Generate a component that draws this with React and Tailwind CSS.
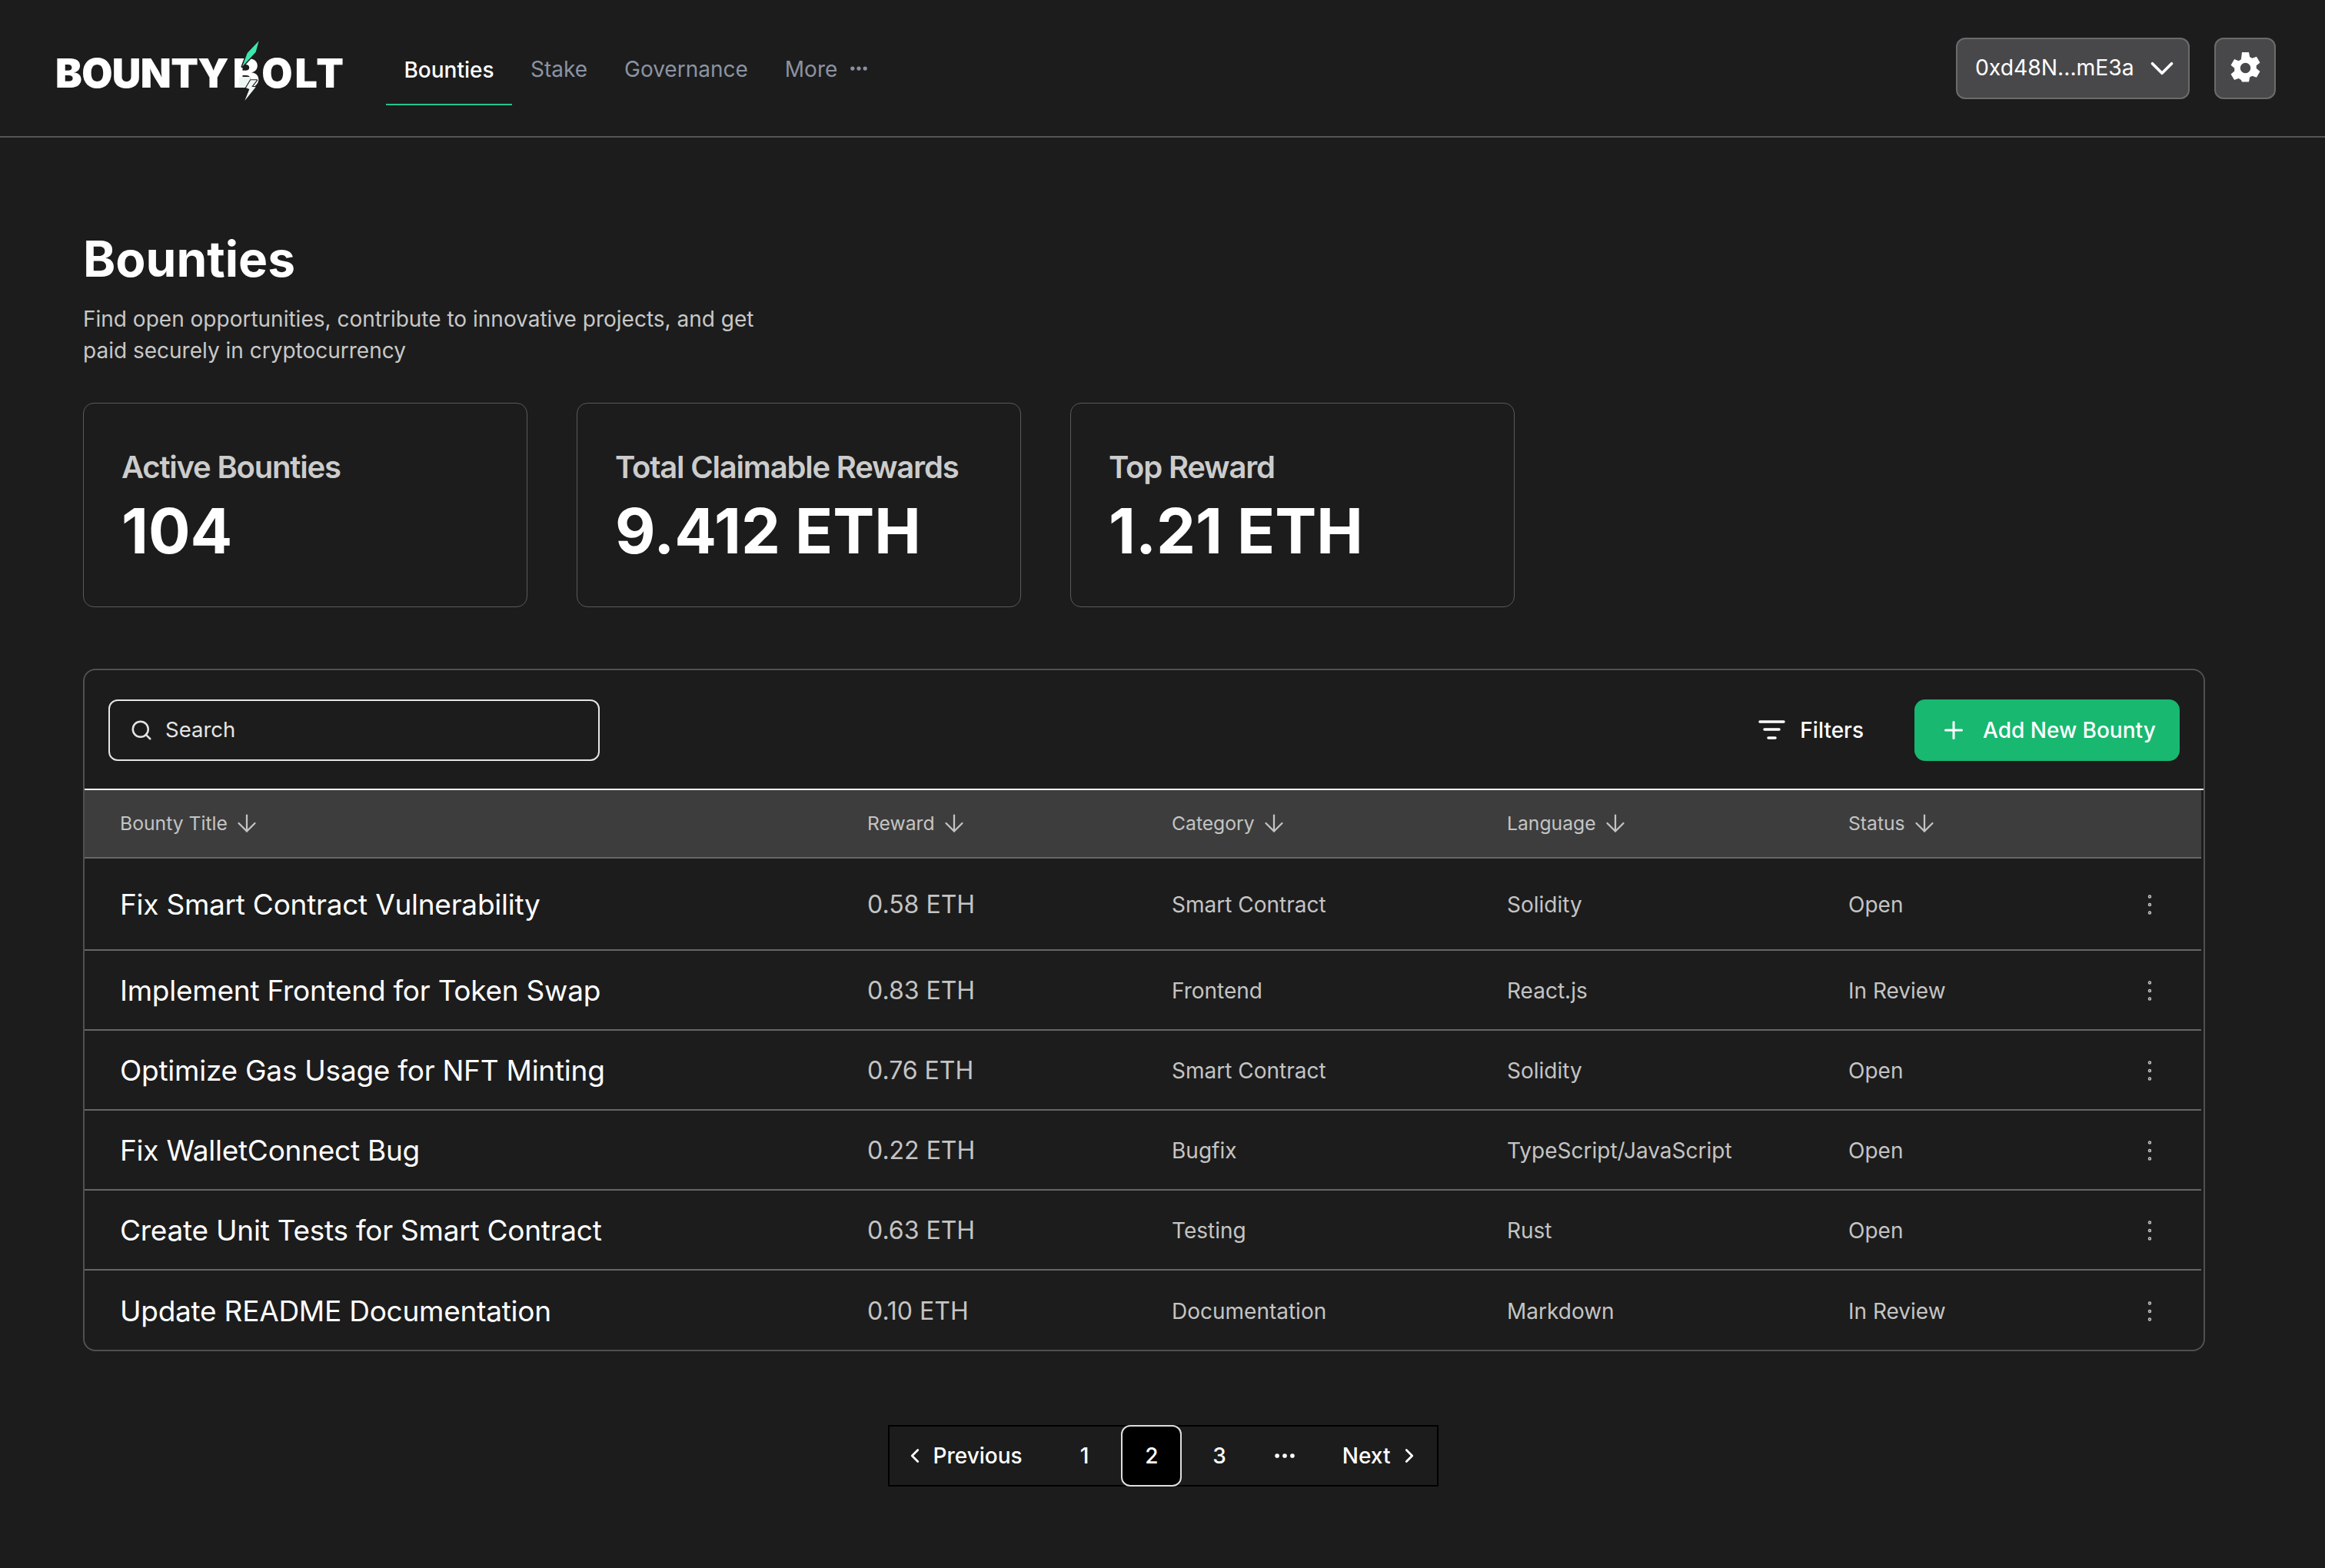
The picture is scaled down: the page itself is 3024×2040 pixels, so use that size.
import React from "react";
import { Search, ArrowDown, Plus, ChevronDown, ChevronLeft, ChevronRight, MoreVertical, MoreHorizontal } from "lucide-react";

const rows = [
  { title: "Fix Smart Contract Vulnerability", reward: "0.58 ETH", category: "Smart Contract", language: "Solidity", status: "Open" },
  { title: "Implement Frontend for Token Swap", reward: "0.83 ETH", category: "Frontend", language: "React.js", status: "In Review" },
  { title: "Optimize Gas Usage for NFT Minting", reward: "0.76 ETH", category: "Smart Contract", language: "Solidity", status: "Open" },
  { title: "Fix WalletConnect Bug", reward: "0.22 ETH", category: "Bugfix", language: "TypeScript/JavaScript", status: "Open" },
  { title: "Create Unit Tests for Smart Contract", reward: "0.63 ETH", category: "Testing", language: "Rust", status: "Open" },
  { title: "Update README Documentation", reward: "0.10 ETH", category: "Documentation", language: "Markdown", status: "In Review" },
];

const stats = [
  { label: "Active Bounties", value: "104" },
  { label: "Total Claimable Rewards", value: "9.412 ETH" },
  { label: "Top Reward", value: "1.21 ETH" },
];

const gridCols = "grid grid-cols-[972px_396px_436px_444px_1fr] items-center";

function Logo() {
  return (
    <div className="relative mt-[14px] w-[380px] text-[52px] leading-none font-black tracking-[-0.6px] [word-spacing:-4px] text-white whitespace-nowrap">
      <span>BOUNTY</span> <span className="tracking-[2.8px]">BOLT</span>
      {/* bolt over the B, viewBox is 3x real pixels */}
      <svg className="absolute left-[218px] top-[-25px]" width="100" height="95" viewBox="0 0 300 285">
        <path d="M140 25 L128 68 L75 125 L95 72 Z" fill="#3fe6ab" stroke="#1c1c1c" strokeWidth="9" paintOrder="stroke" strokeLinejoin="round" />
        <path d="M90 165 L105 165 L105 205 L62 205 L62 165 Z" fill="#eef6f4" />
        <path d="M132 178 L112 203 L128 205 L85 258 L103 213 L90 208 L108 178 Z" fill="#eef6f4" stroke="#1c1c1c" strokeWidth="7" paintOrder="stroke" strokeLinejoin="round" />
      </svg>
    </div>
  );
}

function Header() {
  return (
    <header className="flex h-[179px] items-center border-b-2 border-[#555555] pl-[72px] pr-[64px]">
      <Logo />
      <nav className="ml-[50px] flex h-full items-center text-[28px] text-[#8b93a3]">
        <a className="mb-[40px] flex h-[90px] w-[164px] items-center justify-center self-end border-b-2 border-[#22c58b] font-medium text-white">Bounties</a>
        <a className="ml-[24px] pt-[2px]">Stake</a>
        <a className="ml-[48px] pt-[2px]">Governance</a>
        <a className="ml-[48px] pt-[2px]">More</a>
        <MoreHorizontal className="ml-[14px]" size={28} strokeWidth={2.5} />
      </nav>
      <div className="ml-auto flex items-center gap-[32px]">
        <button className="flex h-[80px] w-[304px] items-center justify-between rounded-[12px] border-2 border-[#6b6b6b] bg-[#48484a] pl-[23px] pr-[9px] text-[28.3px] font-normal text-white">
          0xd48N...mE3a
          <ChevronDown size={50} strokeWidth={1.8} />
        </button>
        <button className="flex h-[80px] w-[80px] items-center justify-center rounded-[12px] border-2 border-[#6b6b6b] bg-[#48484a]">
          <svg width="45" height="45" viewBox="0 0 24 24" fill="white">
            <path fillRule="evenodd" d="M9.6 1h4.8l.6 3.2 1.7 1 3-1.1 2.4 4.1-2.5 2.1v2l2.5 2.1-2.4 4.1-3-1.1-1.7 1-.6 3.2H9.6L9 20.2l-1.7-1-3 1.1-2.4-4.1 2.5-2.1v-2L1.9 10l2.4-4.1 3 1.1 1.7-1zM12 8.4a3.6 3.6 0 100 7.2 3.6 3.6 0 000-7.2z" />
          </svg>
        </button>
      </div>
    </header>
  );
}

function StatCard({ label, value }) {
  return (
    <div className="flex h-[266px] w-[578px] flex-col rounded-[14px] border border-[#5a5a5a] pl-[49px] pt-[58px]">
      <span className="text-[40px] leading-[50px] font-semibold tracking-[-1.2px] text-[#cccccc]">{label}</span>
      <span className="mt-[10px] text-[81px] leading-[96px] font-bold text-white">{value}</span>
    </div>
  );
}

function HeaderCell({ children }) {
  return (
    <div className="flex items-center gap-[7px] text-[24.7px] text-[#c4c4c4]">
      {children}
      <ArrowDown size={36} strokeWidth={1.5} />
    </div>
  );
}

function Row({ row, first }) {
  return (
    <div className={`${gridCols} border-b-2 border-[#666666] pl-[46px] pt-[2px] ${first ? "h-[120px]" : "h-[104px]"} last:h-[103px] last:border-b-0`}>
      <span className="text-[37px] tracking-[-0.25px] text-white">{row.title}</span>
      <span className="text-[32px] text-[#c4c4c4]">{row.reward}</span>
      <span className="text-[28px] text-[#c4c4c4]">{row.category}</span>
      <span className="text-[28px] text-[#c4c4c4]">{row.language}</span>
      <div className="flex items-center justify-between pr-[49px]">
        <span className="text-[28px] text-[#c4c4c4]">{row.status}</span>
        <MoreVertical size={36} strokeWidth={1} className="text-[#c4c4c4]" />
      </div>
    </div>
  );
}

function BountyTable() {
  return (
    <section className="mt-[80px] w-[2760px] rounded-[16px] border-2 border-[#505050]">
      <div className="flex h-[156px] items-center justify-between border-b-2 border-white pl-[31px] pr-[31px] pt-[2px]">
        <div className="flex h-[80px] w-[639px] items-center gap-[16px] rounded-[12px] border-2 border-[#e5e5e5] pl-[26px] text-[27.5px] text-[#e5e5e5]">
          <Search size={30} strokeWidth={2} />
          Search
        </div>
        <div className="flex items-center gap-[66px]">
          <button className="flex items-center gap-[19px] text-[28px] font-medium text-white">
            <svg width="35" height="28" viewBox="0 0 35 28" stroke="white" strokeWidth="3.5" strokeLinecap="round">
              <path d="M2 3h31M8 13h19M13 24h9" />
            </svg>
            Filters
          </button>
          <button className="flex h-[80px] w-[345px] items-center gap-[20px] rounded-[14px] bg-[#18b871] pl-[33px] text-[28px] font-medium text-white">
            <Plus size={36} strokeWidth={2} />
            Add New Bounty
          </button>
        </div>
      </div>
      <div className="pr-[3px]">
        <div className={`${gridCols} h-[89px] border-b-2 border-[#666666] bg-[#3d3d3d] pl-[46px]`}>
          <HeaderCell>Bounty Title</HeaderCell>
          <HeaderCell>Reward</HeaderCell>
          <HeaderCell>Category</HeaderCell>
          <HeaderCell>Language</HeaderCell>
          <HeaderCell>Status</HeaderCell>
        </div>
        {rows.map((row, i) => (
          <Row key={row.title} row={row} first={i === 0} />
        ))}
      </div>
    </section>
  );
}

function Pagination() {
  return (
    <div className="mt-[96px] flex w-[2809px] justify-center">
      <div className="flex h-[80px] w-[716px] items-center border-2 border-black text-[28px] font-medium text-white">
        <ChevronLeft className="ml-[18px]" size={30} strokeWidth={2.2} />
        <span className="ml-[9px]">Previous</span>
        <span className="ml-[75px]">1</span>
        <span className="ml-[42px] flex h-[80px] w-[79px] shrink-0 items-center justify-center rounded-[12px] border-2 border-[#dddddd] bg-black">2</span>
        <span className="ml-[40px]">3</span>
        <MoreHorizontal className="ml-[59px]" size={34} strokeWidth={2} />
        <span className="ml-[58px]">Next</span>
        <ChevronRight className="ml-[9px]" size={30} strokeWidth={2.2} />
      </div>
    </div>
  );
}

export default function App() {
  return (
    <div className="h-[2040px] w-[3024px] overflow-hidden bg-[#1c1c1c] font-['Inter',sans-serif]">
      <Header />
      <main className="pl-[108px] pt-[120px]">
        <h1 className="text-[64px] leading-[76px] font-bold text-white">Bounties</h1>
        <p className="mt-[20px] w-[900px] text-[28px] leading-[41px] text-[#c8c8c8]">
          Find open opportunities, contribute to innovative projects, and get paid securely in cryptocurrency
        </p>
        <div className="mt-[47px] flex gap-[64px]">
          {stats.map((s) => (
            <StatCard key={s.label} label={s.label} value={s.value} />
          ))}
        </div>
        <BountyTable />
        <Pagination />
      </main>
    </div>
  );
}
